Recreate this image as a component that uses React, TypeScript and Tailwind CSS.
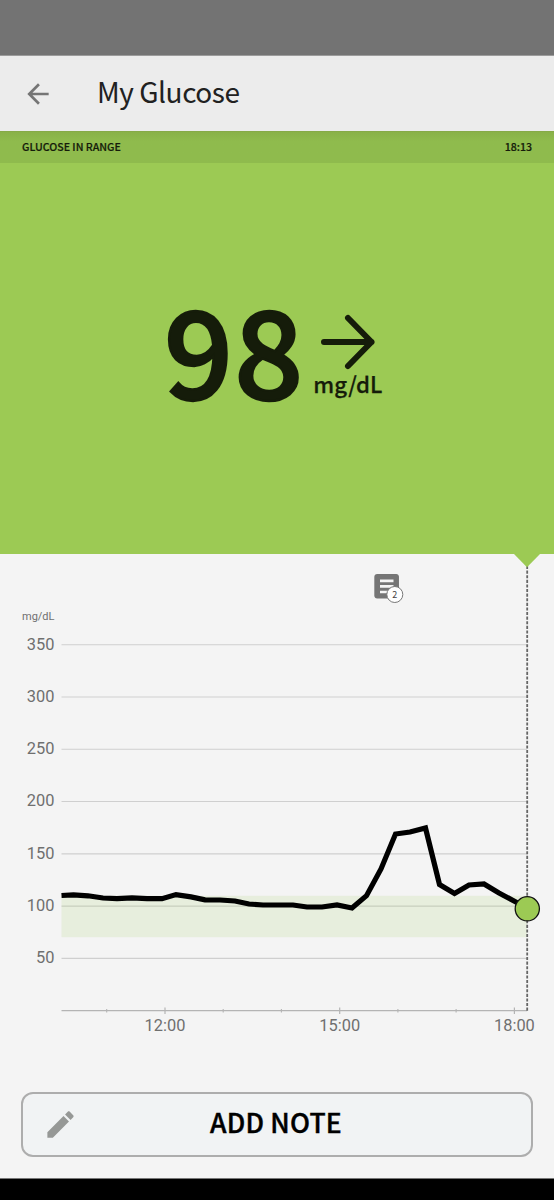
import React from 'react';

const readings: [number, number][] = [
  [61.5, 895.5], [73.5, 894.8], [88, 895.8], [103, 898], [117, 898.7], [132, 897.9],
  [147, 898.7], [162, 898.7], [176, 894.6], [191, 896.9], [205, 899.8], [220, 900],
  [235, 901], [249, 904], [263, 905], [278, 905], [293, 905], [307, 907], [322, 907],
  [337, 905], [352, 908], [366.5, 895.7], [381, 869], [395.5, 834], [410, 832],
  [425.5, 828], [439.5, 884.5], [454.5, 893.5], [469, 885], [484, 884], [499, 893],
  [514, 901], [527, 908],
];

const levels = [350, 300, 250, 200, 150, 100, 50];

const hours = [
  { label: '12:00', x: 165 },
  { label: '15:00', x: 339.7 },
  { label: '18:00', x: 514.4 },
];

const minorTicks = [106.7, 223.2, 281.4, 397.9, 456.1];

const levelY = (level: number) => 1010.7 - level * 1.0457;

const NoteMarker: React.FC = () => (
  <g>
    <path
      transform="translate(370.2 569.8) scale(1.37)"
      d="M19 3H5c-1.1 0-2 .9-2 2v14c0 1.1.9 2 2 2h14c1.1 0 2-.9 2-2V5c0-1.1-.9-2-2-2z"
      className="fill-[#757575]"
    />
    <path d="M380 580.9h13.5M380 586.4h13.5M380 592h9" className="stroke-[#f4f4f4]" strokeWidth="2.6" />
    <circle cx="394.8" cy="594.5" r="8" className="fill-white stroke-[#777777]" strokeWidth="1" />
    <text x="394.8" y="597.7" textAnchor="middle" className="fill-[#444444] font-['Noto_Sans_CJK_SC',sans-serif] text-[9px]">2</text>
  </g>
);

const GlucoseChart: React.FC = () => (
  <svg width="554" height="506" viewBox="0 554 554 506" className="block font-[Roboto,sans-serif]">
    <text x="54.5" y="620" textAnchor="end" className="fill-[#6f6f6f] text-[11px]">mg/dL</text>

    {levels.map((level) => (
      <g key={level}>
        <line x1="61.5" x2="527" y1={levelY(level)} y2={levelY(level)} className="stroke-[#cfcfcf]" strokeWidth="1.1" />
        <text x="54.5" y={levelY(level) + 4.9} textAnchor="end" className="fill-[#6f6f6f] text-[16.4px]">{level}</text>
      </g>
    ))}

    {/* target range */}
    <rect x="61.5" y="895.8" width="465.5" height="41.4" className="fill-[#9ccc54]/14" />

    {/* time axis */}
    <line x1="61.5" x2="527" y1="1010.7" y2="1010.7" className="stroke-[#b4b4b4]" strokeWidth="1.2" />
    {minorTicks.map((x) => (
      <line key={x} x1={x} x2={x} y1="1009" y2="1012.5" className="stroke-[#b4b4b4]" strokeWidth="1.1" />
    ))}
    {hours.map(({ label, x }) => (
      <g key={label}>
        <line x1={x} x2={x} y1="1007.5" y2="1014" className="stroke-[#b4b4b4]" strokeWidth="1.2" />
        <text x={x} y="1031.3" textAnchor="middle" className="fill-[#6f6f6f] text-[16.4px]">{label}</text>
      </g>
    ))}

    <NoteMarker />

    {/* current reading */}
    <line x1="527.2" x2="527.2" y1="566" y2="1010.7" className="stroke-[#666666]" strokeWidth="1.8" strokeDasharray="3.1 1.5" />
    <polygon points="513.5,553.5 540.5,553.5 527,567.3" className="fill-[#9cca54]" />
    <polyline points={readings.map((p) => p.join(',')).join(' ')} className="fill-none stroke-black" strokeWidth="5.2" />
    <circle cx="527.3" cy="908.8" r="12.1" className="fill-[#9cca54] stroke-[#111111]" strokeWidth="1.3" />
  </svg>
);

const App: React.FC = () => {
  return (
    <div className="flex h-[1200px] w-[554px] flex-col overflow-hidden bg-[#f4f4f4] font-['Noto_Sans_CJK_SC',sans-serif]">
      <div className="h-[56px] shrink-0 border-b border-[#9b9b9b] bg-[#737373]" />

      <header className="flex h-[75px] shrink-0 items-center bg-[#ececec] pl-[22px]">
        <svg width="32" height="32" viewBox="0 0 24 24" className="shrink-0">
          <path d="M20 11H7.83l5.59-5.59L12 4l-8 8 8 8 1.41-1.41L7.83 13H20v-2z" className="fill-[#757575]" />
        </svg>
        <h1 className="ml-[43px] pb-[5px] text-[28px] leading-none tracking-[-0.45px] text-[#212121]">My Glucose</h1>
      </header>

      <section className="flex h-[423px] shrink-0 flex-col bg-[#9cca54] text-[#151c0a]">
        <div className="flex h-8 items-center justify-between border-t border-[#86aa47] bg-[#8fbb4d] bg-linear-to-b from-[#89b148] to-[#8fbb4d] to-30% px-[22px] pb-0.5 text-[10.6px] font-medium [-webkit-text-stroke:0.2px]">
          <span>GLUCOSE IN RANGE</span>
          <span>18:13</span>
        </div>
        <div className="flex flex-1 pt-[123px] pl-[164px]">
          <span className="text-[121px] leading-[122px] font-medium tracking-[1.2px] [-webkit-text-stroke:2.4px]">98</span>
          <div className="ml-[9px] flex flex-col items-center pt-[27px]">
            <svg width="56" height="58" viewBox="0 0 56 58" fill="none" className="shrink-0 stroke-current" strokeWidth="6" strokeLinecap="round" strokeLinejoin="round">
              <path d="M4 29H51.5M28 5L51.5 29L28 53" />
            </svg>
            <span className="-mt-0.5 text-[22.2px] leading-7 font-medium [-webkit-text-stroke:0.25px]">mg/dL</span>
          </div>
        </div>
      </section>

      <GlucoseChart />

      <div className="flex flex-1 flex-col px-[21px] pt-[32px]">
        <button className="grid h-[65px] grid-cols-[1fr_auto_1fr] items-center rounded-[12px] border-2 border-[#adadad] bg-[#f1f3f4] text-[26.5px] font-medium text-black">
          <svg width="35" height="35" viewBox="0 0 24 24" className="ml-5">
            <path d="M3 17.25V21h3.75L17.81 9.94l-3.75-3.75L3 17.25zM20.71 7.04c.39-.39.39-1.02 0-1.41l-2.34-2.34c-.39-.39-1.02-.39-1.41 0l-1.83 1.83 3.75 3.75 1.83-1.83z" className="fill-[#969896]" />
          </svg>
          <span className="pr-0.5 pb-1 leading-none tracking-[0.2px] [-webkit-text-stroke:0.4px]">ADD NOTE</span>
        </button>
      </div>

      <div className="h-[22px] shrink-0 border-t border-[#777777] bg-black" />
    </div>
  );
};

export default App;
